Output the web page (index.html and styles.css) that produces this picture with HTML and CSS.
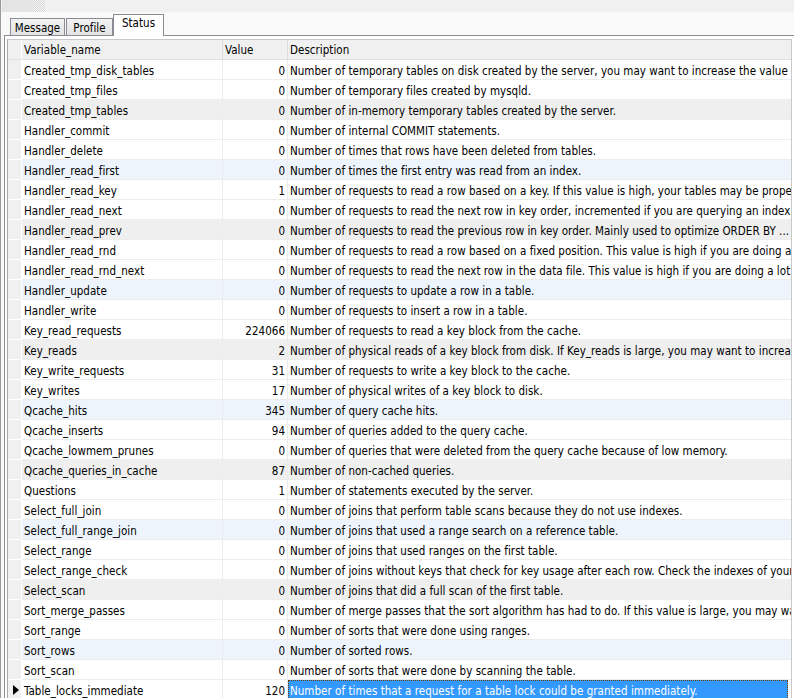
FILE: index.html
```html
<!DOCTYPE html>
<html>
<head>
<meta charset="utf-8">
<title>Status</title>
<link rel="stylesheet" href="styles.css">
</head>
<body>
<div class="frame">
  <div class="topbar"><span class="bar-l"></span><span class="grip"></span></div>
  <div class="tabs">
    <div class="tab t-msg">Message</div>
    <div class="tab t-prof">Profile</div>
    <div class="tab active">Status</div>
  </div>
  <div class="panel">
    <div class="grid">
      <div class="row head"><div class="ind"></div><div class="c">Variable_name</div><div class="c">Value</div><div class="c">Description</div></div>
      <div class="row"><div class="ind"></div><div class="c">Created_tmp_disk_tables</div><div class="c num">0</div><div class="c">Number of temporary tables on disk created by the server, you may want to increase the value of tmp_table_size.</div></div>
      <div class="row"><div class="ind"></div><div class="c">Created_tmp_files</div><div class="c num">0</div><div class="c">Number of temporary files created by mysqld.</div></div>
      <div class="row grey"><div class="ind"></div><div class="c">Created_tmp_tables</div><div class="c num">0</div><div class="c">Number of in-memory temporary tables created by the server.</div></div>
      <div class="row"><div class="ind"></div><div class="c">Handler_commit</div><div class="c num">0</div><div class="c">Number of internal COMMIT statements.</div></div>
      <div class="row"><div class="ind"></div><div class="c">Handler_delete</div><div class="c num">0</div><div class="c">Number of times that rows have been deleted from tables.</div></div>
      <div class="row blue"><div class="ind"></div><div class="c">Handler_read_first</div><div class="c num">0</div><div class="c">Number of times the first entry was read from an index.</div></div>
      <div class="row"><div class="ind"></div><div class="c">Handler_read_key</div><div class="c num">1</div><div class="c">Number of requests to read a row based on a key. If this value is high, your tables may be properly indexed for your queries.</div></div>
      <div class="row"><div class="ind"></div><div class="c">Handler_read_next</div><div class="c num">0</div><div class="c">Number of requests to read the next row in key order, incremented if you are querying an index column with a range constraint.</div></div>
      <div class="row grey"><div class="ind"></div><div class="c">Handler_read_prev</div><div class="c num">0</div><div class="c">Number of requests to read the previous row in key order. Mainly used to optimize ORDER BY ... DESC.</div></div>
      <div class="row"><div class="ind"></div><div class="c">Handler_read_rnd</div><div class="c num">0</div><div class="c">Number of requests to read a row based on a fixed position. This value is high if you are doing a lot of queries that require sorting of the result.</div></div>
      <div class="row"><div class="ind"></div><div class="c">Handler_read_rnd_next</div><div class="c num">0</div><div class="c">Number of requests to read the next row in the data file. This value is high if you are doing a lot of table scans.</div></div>
      <div class="row blue"><div class="ind"></div><div class="c">Handler_update</div><div class="c num">0</div><div class="c">Number of requests to update a row in a table.</div></div>
      <div class="row"><div class="ind"></div><div class="c">Handler_write</div><div class="c num">0</div><div class="c">Number of requests to insert a row in a table.</div></div>
      <div class="row"><div class="ind"></div><div class="c">Key_read_requests</div><div class="c num">224066</div><div class="c">Number of requests to read a key block from the cache.</div></div>
      <div class="row grey"><div class="ind"></div><div class="c">Key_reads</div><div class="c num">2</div><div class="c">Number of physical reads of a key block from disk. If Key_reads is large, you may want to increase key_buffer_size.</div></div>
      <div class="row"><div class="ind"></div><div class="c">Key_write_requests</div><div class="c num">31</div><div class="c">Number of requests to write a key block to the cache.</div></div>
      <div class="row"><div class="ind"></div><div class="c">Key_writes</div><div class="c num">17</div><div class="c">Number of physical writes of a key block to disk.</div></div>
      <div class="row blue"><div class="ind"></div><div class="c">Qcache_hits</div><div class="c num">345</div><div class="c">Number of query cache hits.</div></div>
      <div class="row"><div class="ind"></div><div class="c">Qcache_inserts</div><div class="c num">94</div><div class="c">Number of queries added to the query cache.</div></div>
      <div class="row"><div class="ind"></div><div class="c">Qcache_lowmem_prunes</div><div class="c num">0</div><div class="c">Number of queries that were deleted from the query cache because of low memory.</div></div>
      <div class="row grey"><div class="ind"></div><div class="c">Qcache_queries_in_cache</div><div class="c num">87</div><div class="c">Number of non-cached queries.</div></div>
      <div class="row"><div class="ind"></div><div class="c">Questions</div><div class="c num">1</div><div class="c">Number of statements executed by the server.</div></div>
      <div class="row"><div class="ind"></div><div class="c">Select_full_join</div><div class="c num">0</div><div class="c">Number of joins that perform table scans because they do not use indexes.</div></div>
      <div class="row blue"><div class="ind"></div><div class="c">Select_full_range_join</div><div class="c num">0</div><div class="c">Number of joins that used a range search on a reference table.</div></div>
      <div class="row"><div class="ind"></div><div class="c">Select_range</div><div class="c num">0</div><div class="c">Number of joins that used ranges on the first table.</div></div>
      <div class="row"><div class="ind"></div><div class="c">Select_range_check</div><div class="c num">0</div><div class="c">Number of joins without keys that check for key usage after each row. Check the indexes of your tables.</div></div>
      <div class="row grey"><div class="ind"></div><div class="c">Select_scan</div><div class="c num">0</div><div class="c">Number of joins that did a full scan of the first table.</div></div>
      <div class="row"><div class="ind"></div><div class="c">Sort_merge_passes</div><div class="c num">0</div><div class="c">Number of merge passes that the sort algorithm has had to do. If this value is large, you may want to increase sort_buffer_size.</div></div>
      <div class="row"><div class="ind"></div><div class="c">Sort_range</div><div class="c num">0</div><div class="c">Number of sorts that were done using ranges.</div></div>
      <div class="row blue"><div class="ind"></div><div class="c">Sort_rows</div><div class="c num">0</div><div class="c">Number of sorted rows.</div></div>
      <div class="row"><div class="ind"></div><div class="c">Sort_scan</div><div class="c num">0</div><div class="c">Number of sorts that were done by scanning the table.</div></div>
      <div class="row current"><div class="ind"><span class="arrow"></span></div><div class="c">Table_locks_immediate</div><div class="c num">120</div><div class="c sel">Number of times that a request for a table lock could be granted immediately.</div></div>
    </div>
  </div>
</div>
</body>
</html>
```

FILE: styles.css
```css
html, body {
  margin: 0;
  padding: 0;
  background: #ffffff;
}

body {
  font-family: "DejaVu Sans Condensed", "DejaVu Sans", "Liberation Sans", sans-serif;
  font-size: 11.5px;
  letter-spacing: 0.03px;
  color: #000;
  overflow: hidden;
}

.frame {
  height: 698px;
  border-left: 1px solid #9a9a9a;
  overflow: hidden;
  background: #f9f9f9;
}

.topbar {
  display: flex;
  height: 12px;
  background: #f0f0f0;
}

.bar-l {
  width: 31px;
  margin-left: 1px;
  background: #e4e4e4;
}

.grip {
  width: 12px;
  background: repeating-conic-gradient(#d6d6d6 0 25%, #f7f7f7 0 50%) 0 0 / 2px 2px;
}

.tabs {
  display: flex;
  align-items: flex-end;
  height: 23px;
  padding-left: 9px;
  position: relative;
  z-index: 1;
}

.tab {
  height: 17px;
  line-height: 18px;
  box-sizing: border-box;
  border: 1px solid #898c95;
  border-bottom: none;
  background: linear-gradient(#f2f2f2, #e3e3e3);
  margin-right: 1px;
  text-align: center;
  overflow: hidden;
  white-space: nowrap;
}

.t-msg {
  width: 55px;
}

.t-prof {
  width: 47px;
}

.tab.active {
  width: 51px;
  height: 22px;
  line-height: 17px;
  background: #ffffff;
  margin-left: -1px;
  margin-bottom: -1px;
}

.panel {
  margin-left: 3px;
  border-top: 1px solid #898c95;
  border-left: 1px solid #898c95;
  padding: 3px 0 0 2px;
  background: #ffffff;
  height: 700px;
}

.grid {
  display: grid;
  grid-template-columns: 14px 201px 65px 1fr;
  grid-auto-rows: 20px;
  border-top: 1px solid #c8c8c8;
  border-left: 1px solid #a8a8a8;
  border-right: 1px solid #c8c8c8;
  margin-right: 2px;
  background: #ffffff;
}

.row {
  display: contents;
}

.row > div {
  box-sizing: border-box;
  border-right: 1px solid #ececec;
  border-bottom: 1px solid #ececec;
  white-space: nowrap;
  overflow: hidden;
  line-height: 23px;
}

.c {
  padding: 0 2px 0 2px;
}

.c:nth-child(4) {
  padding-left: 2px;
  border-right: none;
}

.num {
  text-align: right;
  padding-right: 2px;
}

.row > .ind {
  background: #f0f0f0;
  border-right: 1px solid #ffffff;
  border-bottom: 1px solid #ffffff;
  position: relative;
}

.head > div {
  background: #f0f0f0;
  border-right: 1px solid #dcdcdc;
  border-bottom: 1px solid #e2e2e2;
  line-height: 21px;
}

.head > .ind {
  border-bottom: 1px solid #e2e2e2;
}

.grey > .c {
  background: #efefef;
}

.blue > .c {
  background: #edf4fc;
}

.row > .sel {
  background: #3399ff;
  color: #ffffff;
  border: 1px dotted #6b3d00;
  line-height: 21px;
  padding-left: 1px;
  margin-right: 3px;
}

.arrow {
  position: absolute;
  left: 5px;
  top: 5px;
  width: 0;
  height: 0;
  border-left: 6px solid #000;
  border-top: 5px solid transparent;
  border-bottom: 5px solid transparent;
}
```
